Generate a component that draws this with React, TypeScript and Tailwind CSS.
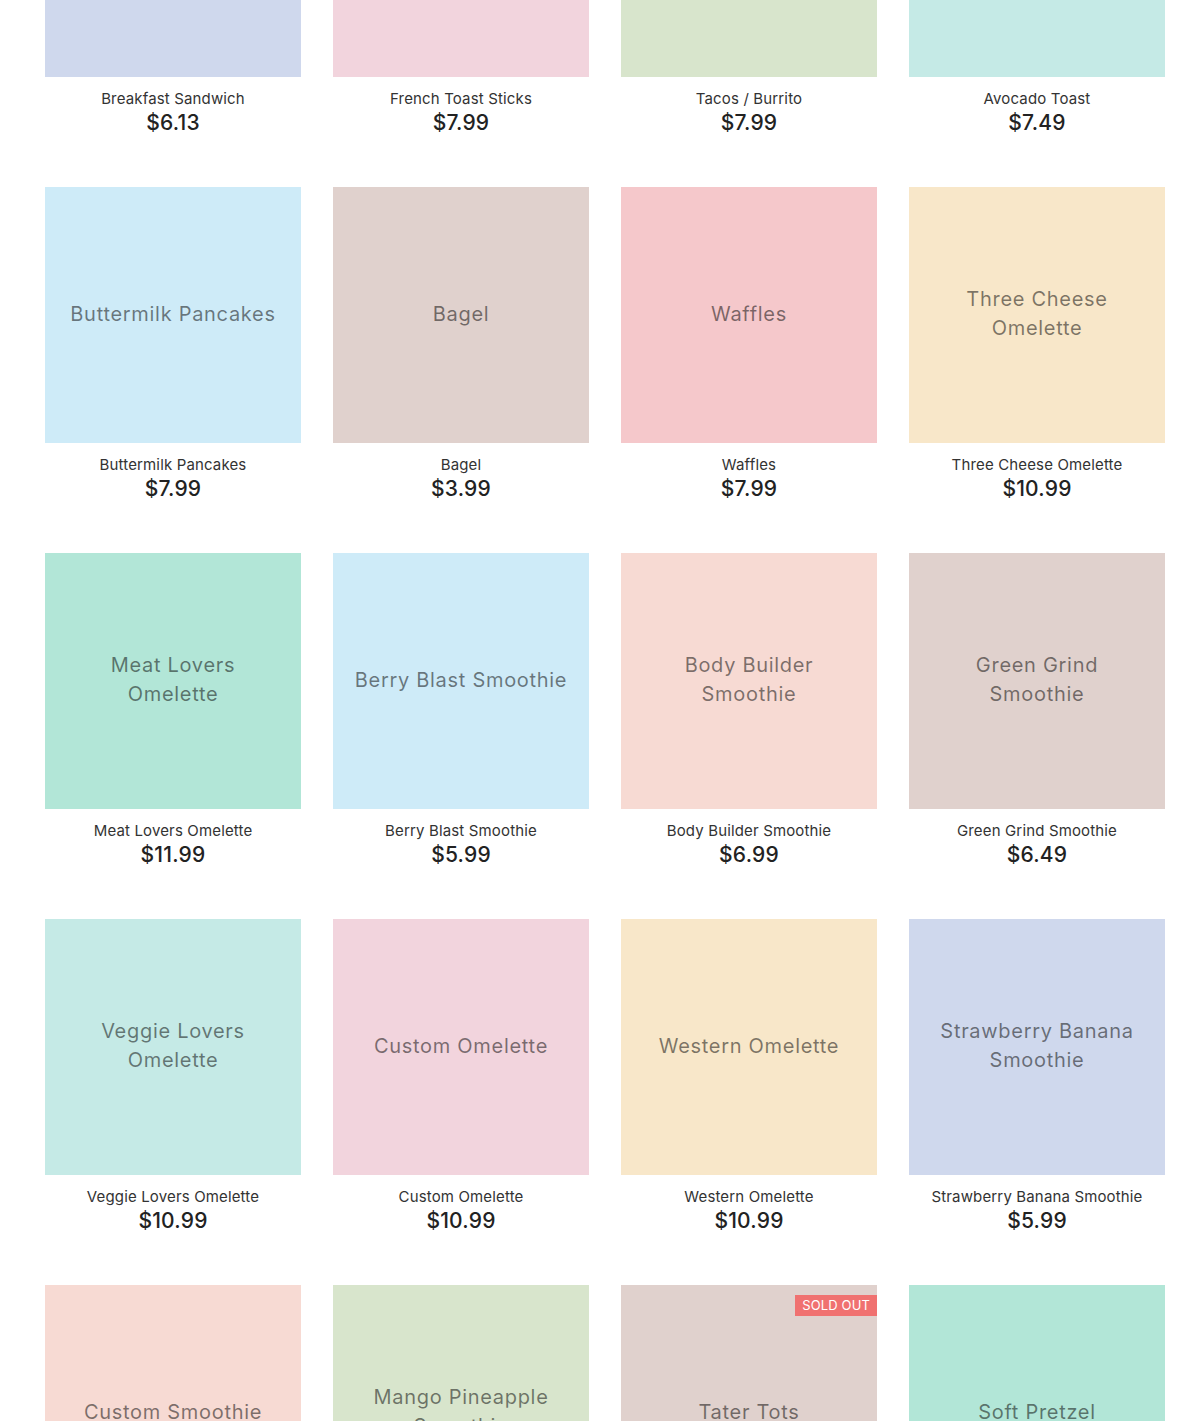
const items: { name: string; label: string; price?: string; bg: string; soldOut?: boolean }[] = [
  { name: "Breakfast Sandwich", label: "Breakfast Sandwich", price: "$6.13", bg: "bg-[#cfd8ed]" },
  { name: "French Toast Sticks", label: "French Toast Sticks", price: "$7.99", bg: "bg-[#f2d4dd]" },
  { name: "Tacos / Burrito", label: "Tacos / Burrito", price: "$7.99", bg: "bg-[#d8e5cc]" },
  { name: "Avocado Toast", label: "Avocado Toast", price: "$7.49", bg: "bg-[#c5eae6]" },
  { name: "Buttermilk Pancakes", label: "Buttermilk Pancakes", price: "$7.99", bg: "bg-[#ceebf8]" },
  { name: "Bagel", label: "Bagel", price: "$3.99", bg: "bg-[#e0d1cd]" },
  { name: "Waffles", label: "Waffles", price: "$7.99", bg: "bg-[#f5c8cb]" },
  { name: "Three Cheese Omelette", label: "Three Cheese\nOmelette", price: "$10.99", bg: "bg-[#f8e7c9]" },
  { name: "Meat Lovers Omelette", label: "Meat Lovers\nOmelette", price: "$11.99", bg: "bg-[#b2e6d7]" },
  { name: "Berry Blast Smoothie", label: "Berry Blast Smoothie", price: "$5.99", bg: "bg-[#ceebf8]" },
  { name: "Body Builder Smoothie", label: "Body Builder\nSmoothie", price: "$6.99", bg: "bg-[#f7dad3]" },
  { name: "Green Grind Smoothie", label: "Green Grind\nSmoothie", price: "$6.49", bg: "bg-[#e0d1cd]" },
  { name: "Veggie Lovers Omelette", label: "Veggie Lovers\nOmelette", price: "$10.99", bg: "bg-[#c5eae6]" },
  { name: "Custom Omelette", label: "Custom Omelette", price: "$10.99", bg: "bg-[#f2d4dd]" },
  { name: "Western Omelette", label: "Western Omelette", price: "$10.99", bg: "bg-[#f8e7c9]" },
  { name: "Strawberry Banana Smoothie", label: "Strawberry Banana\nSmoothie", price: "$5.99", bg: "bg-[#cfd8ed]" },
  { name: "Custom Smoothie", label: "Custom Smoothie", bg: "bg-[#f7dad3]" },
  { name: "Mango Pineapple Smoothie", label: "Mango Pineapple\nSmoothie", bg: "bg-[#d8e5cc]" },
  { name: "Tater Tots", label: "Tater Tots", bg: "bg-[#e0d1cd]", soldOut: true },
  { name: "Soft Pretzel", label: "Soft Pretzel", bg: "bg-[#b2e6d7]" },
];

function Card({ item }: { item: (typeof items)[number] }) {
  return (
    <div className="flex flex-col items-center">
      <div className={`relative w-full h-[256px] ${item.bg} flex items-center justify-center px-[12px] pb-[2px]`}>
        <span className="whitespace-pre-line text-[20px] leading-[29px] tracking-[0.035em] text-center text-black/50">
          {item.label}
        </span>
        {item.soldOut && (
          <span className="absolute top-[10px] right-0 bg-[#f07170] text-white text-[13px] leading-[21px] px-[7px] tracking-[0.01em]">
            SOLD OUT
          </span>
        )}
      </div>
      <div className="mt-[12px] text-[15px] leading-[20px] tracking-[0.01em] text-[#333]">{item.name}</div>
      <div className="text-[21px] leading-[28px] font-medium tracking-[0.01em] text-[#222]">{item.price}</div>
    </div>
  );
}

export default function App() {
  return (
    <div className="w-[1190px] h-[1421px] overflow-hidden bg-white" style={{ fontFamily: "Inter, 'Noto Sans', sans-serif" }}>
      <div className="mt-[-179px] pl-[45px] pr-[25px] grid grid-cols-4 gap-x-[32px] gap-y-[50px]">
        {items.map((it) => (
          <Card key={it.name} item={it} />
        ))}
      </div>
    </div>
  );
}
